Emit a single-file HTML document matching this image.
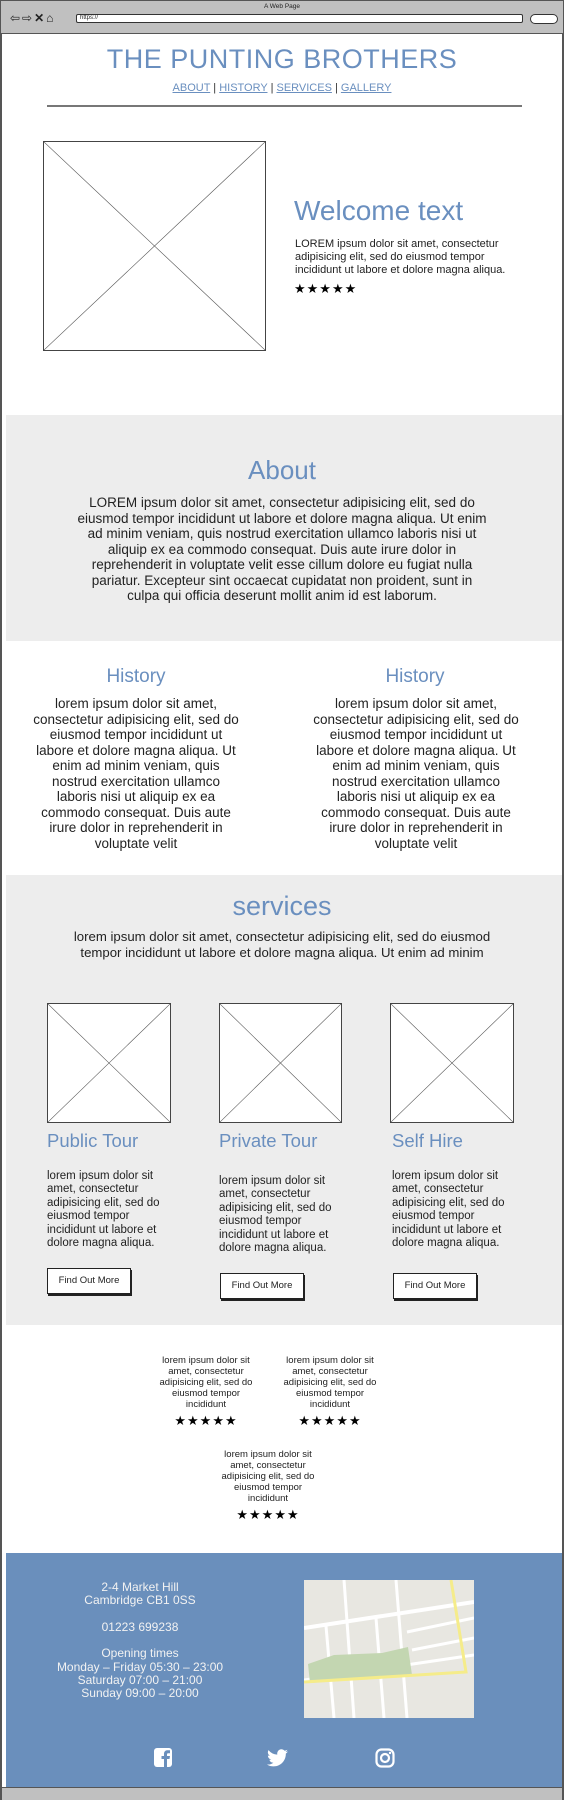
<!DOCTYPE html>
<html><head><meta charset="utf-8"><style>
*{margin:0;padding:0;box-sizing:border-box}
body{width:564px;height:1800px;position:relative;background:#fff;font-family:"Liberation Sans",sans-serif;color:#222;overflow:hidden}
.a{position:absolute}
.blue{color:#6a8fbf}
.c{text-align:center}
.ph{position:absolute;border:1.5px solid #444;background:#fff}
.ph svg{position:absolute;left:0;top:0;width:100%;height:100%}
.btn{position:absolute;border:1.5px solid #222;box-shadow:1px 2px 0 #222;background:#fff;font-size:9.5px;text-align:center;line-height:23px}
.stars{font-size:13px;letter-spacing:1px;color:#000}
</style></head><body>
<div class="a" style="left:0;top:0;width:564px;height:1800px;border:2px solid #555;border-top:none"></div>
<div class="a" style="left:0;top:0;width:564px;height:34px;background:#c0c0c0;border:1.5px solid #555"></div>
<div class="a c" style="left:0;top:3px;width:564px;font-size:6.5px;color:#222">A Web Page</div>
<div class="a" style="left:10px;top:11px;font-size:12px;color:#222;letter-spacing:2px">⇦⇨<b>✕</b>⌂</div>
<div class="a" style="left:76px;top:14px;width:447px;height:9px;border:1.5px solid #333;border-radius:2px;background:#fff;font-size:6px;line-height:6px;padding-left:3px">https://</div>
<div class="a" style="left:530px;top:14px;width:28px;height:10px;border:1.5px solid #333;border-radius:6px;background:#fff"></div>
<div class="a" style="left:2px;top:1787px;width:560px;height:13px;background:#c0c0c0;border-top:1.5px solid #555"></div>

<div class="a c blue" style="left:0;top:44px;width:564px;font-size:27px;letter-spacing:0.5px">THE PUNTING BROTHERS</div>
<div class="a c blue" style="left:0;top:82px;width:564px;font-size:11px"><u>ABOUT</u> <span style="color:#333">|</span> <u>HISTORY</u> <span style="color:#333">|</span> <u>SERVICES</u> <span style="color:#333">|</span> <u>GALLERY</u></div>
<div class="a" style="left:47px;top:105px;width:475px;height:1.5px;background:#777"></div>

<div class="ph" style="left:43px;top:141px;width:223px;height:210px"><svg viewBox="0 0 100 100" preserveAspectRatio="none"><path d="M0 0L100 100M100 0L0 100" stroke="#555" stroke-width="0.6" vector-effect="non-scaling-stroke" fill="none"/></svg></div>
<div class="a blue" style="left:294px;top:195px;font-size:28px">Welcome text</div>
<div class="a" style="left:295px;top:238px;font-size:11px;line-height:13.2px">LOREM ipsum dolor sit amet, consectetur<br>adipisicing elit, sed do eiusmod tempor<br>incididunt ut labore et dolore magna aliqua.</div>
<div class="a stars" style="left:294px;top:281px">★★★★★</div>

<div class="a" style="left:6px;top:415px;width:556px;height:226px;background:#ededed"></div>
<div class="a c blue" style="left:0;top:455px;width:564px;font-size:26px">About</div>
<div class="a c" style="left:0;top:495px;width:564px;font-size:13.5px;line-height:15.5px">LOREM ipsum dolor sit amet, consectetur adipisicing elit, sed do<br>eiusmod tempor incididunt ut labore et dolore magna aliqua. Ut enim<br>ad minim veniam, quis nostrud exercitation ullamco laboris nisi ut<br>aliquip ex ea commodo consequat. Duis aute irure dolor in<br>reprehenderit in voluptate velit esse cillum dolore eu fugiat nulla<br>pariatur. Excepteur sint occaecat cupidatat non proident, sunt in<br>culpa qui officia deserunt mollit anim id est laborum.</div>

<div class="a c blue" style="left:36px;top:666px;width:200px;font-size:19px">History</div>
<div class="a c blue" style="left:315px;top:666px;width:200px;font-size:19px">History</div>
<div class="a c" style="left:6px;top:696px;width:260px;font-size:13.5px;line-height:15.5px">lorem ipsum dolor sit amet,<br>consectetur adipisicing elit, sed do<br>eiusmod tempor incididunt ut<br>labore et dolore magna aliqua. Ut<br>enim ad minim veniam, quis<br>nostrud exercitation ullamco<br>laboris nisi ut aliquip ex ea<br>commodo consequat. Duis aute<br>irure dolor in reprehenderit in<br>voluptate velit</div>
<div class="a c" style="left:286px;top:696px;width:260px;font-size:13.5px;line-height:15.5px">lorem ipsum dolor sit amet,<br>consectetur adipisicing elit, sed do<br>eiusmod tempor incididunt ut<br>labore et dolore magna aliqua. Ut<br>enim ad minim veniam, quis<br>nostrud exercitation ullamco<br>laboris nisi ut aliquip ex ea<br>commodo consequat. Duis aute<br>irure dolor in reprehenderit in<br>voluptate velit</div>

<div class="a" style="left:6px;top:875px;width:556px;height:450px;background:#ededed"></div>
<div class="a c blue" style="left:0;top:891px;width:564px;font-size:27px">services</div>
<div class="a c" style="left:0;top:929px;width:564px;font-size:13.2px;line-height:16px">lorem ipsum dolor sit amet, consectetur adipisicing elit, sed do eiusmod<br>tempor incididunt ut labore et dolore magna aliqua. Ut enim ad minim</div>

<div class="ph" style="left:47px;top:1003px;width:124px;height:120px"><svg viewBox="0 0 100 100" preserveAspectRatio="none"><path d="M0 0L100 100M100 0L0 100" stroke="#555" stroke-width="0.6" vector-effect="non-scaling-stroke" fill="none"/></svg></div>
<div class="ph" style="left:219px;top:1003px;width:123px;height:120px"><svg viewBox="0 0 100 100" preserveAspectRatio="none"><path d="M0 0L100 100M100 0L0 100" stroke="#555" stroke-width="0.6" vector-effect="non-scaling-stroke" fill="none"/></svg></div>
<div class="ph" style="left:390px;top:1003px;width:124px;height:120px"><svg viewBox="0 0 100 100" preserveAspectRatio="none"><path d="M0 0L100 100M100 0L0 100" stroke="#555" stroke-width="0.6" vector-effect="non-scaling-stroke" fill="none"/></svg></div>

<div class="a blue" style="left:47px;top:1130px;font-size:18.5px">Public Tour</div>
<div class="a blue" style="left:219px;top:1130px;font-size:18.5px">Private Tour</div>
<div class="a blue" style="left:392px;top:1130px;font-size:18.5px">Self Hire</div>

<div class="a" style="left:47px;top:1170px;font-size:11.5px;line-height:13.4px">lorem ipsum dolor sit<br>amet, consectetur<br>adipisicing elit, sed do<br>eiusmod tempor<br>incididunt ut labore et<br>dolore magna aliqua.</div>
<div class="a" style="left:219px;top:1175px;font-size:11.5px;line-height:13.4px">lorem ipsum dolor sit<br>amet, consectetur<br>adipisicing elit, sed do<br>eiusmod tempor<br>incididunt ut labore et<br>dolore magna aliqua.</div>
<div class="a" style="left:392px;top:1170px;font-size:11.5px;line-height:13.4px">lorem ipsum dolor sit<br>amet, consectetur<br>adipisicing elit, sed do<br>eiusmod tempor<br>incididunt ut labore et<br>dolore magna aliqua.</div>

<div class="btn" style="left:47px;top:1268px;width:84px;height:26px">Find Out More</div>
<div class="btn" style="left:220px;top:1273px;width:84px;height:26px">Find Out More</div>
<div class="btn" style="left:393px;top:1273px;width:84px;height:26px">Find Out More</div>

<div class="a c" style="left:146px;top:1355px;width:120px;font-size:9.5px;line-height:11px">lorem ipsum dolor sit<br>amet, consectetur<br>adipisicing elit, sed do<br>eiusmod tempor<br>incididunt</div>
<div class="a c stars" style="left:146px;top:1413px;width:120px">★★★★★</div>
<div class="a c" style="left:270px;top:1355px;width:120px;font-size:9.5px;line-height:11px">lorem ipsum dolor sit<br>amet, consectetur<br>adipisicing elit, sed do<br>eiusmod tempor<br>incididunt</div>
<div class="a c stars" style="left:270px;top:1413px;width:120px">★★★★★</div>
<div class="a c" style="left:208px;top:1449px;width:120px;font-size:9.5px;line-height:11px">lorem ipsum dolor sit<br>amet, consectetur<br>adipisicing elit, sed do<br>eiusmod tempor<br>incididunt</div>
<div class="a c stars" style="left:208px;top:1507px;width:120px">★★★★★</div>

<div class="a" style="left:6px;top:1553px;width:556px;height:234px;background:#6a8fbc"></div>
<div class="a c" style="left:35px;top:1581px;width:210px;font-size:12px;line-height:13.3px;color:#f2f2f2">2-4 Market Hill<br>Cambridge CB1 0SS<br><br>01223 699238<br><br>Opening times<br>Monday – Friday 05:30 – 23:00<br>Saturday 07:00 – 21:00<br>Sunday 09:00 – 20:00</div>
<svg class="a" style="left:304px;top:1580px" width="170" height="138" viewBox="0 0 170 138">
<rect width="170" height="138" fill="#e8e7e1"/>
<path d="M0 48L170 22" stroke="#fff" stroke-width="4" fill="none"/>
<path d="M40 0L50 138M92 0L103 138M22 46L30 138M72 38L80 138M103 52L170 38M108 70L170 58M0 100L170 75" stroke="#fff" stroke-width="3" fill="none"/>
<path d="M4 84L30 75L78 73L104 67L108 95L6 103Z" fill="#c3d6b1"/>
<path d="M0 102L162 92L147 0" stroke="#f5ec8a" stroke-width="3" fill="none"/>
</svg>
<svg class="a" style="left:153px;top:1747px" width="20" height="21" viewBox="0 0 20 21"><rect x="1" y="1" width="18" height="19" rx="3" fill="#fff"/><path d="M11 21V12H8.5V9H11V7c0-2.5 1.3-3.8 3.7-3.8H17v3h-1.8c-.8 0-1.2.4-1.2 1.2V9h3l-.5 3H14v9z" fill="#6a8fbc"/></svg>
<svg class="a" style="left:267px;top:1749px" width="21" height="18" viewBox="0 0 24 20"><path d="M24 2.4a9.8 9.8 0 0 1-2.8.8A4.9 4.9 0 0 0 23.300.5a9.9 9.9 0 0 1-3.1 1.2A4.9 4.9 0 0 0 11.8 6.2 14 14 0 0 1 1.7 1 4.9 4.9 0 0 0 3.2 7.6 4.9 4.9 0 0 1 1 7v.1a4.9 4.9 0 0 0 3.9 4.8 4.9 4.9 0 0 1-2.2.1 4.9 4.9 0 0 0 4.6 3.4A9.9 9.9 0 0 1 0 17.4 14 14 0 0 0 7.5 19.6c9 0 14-7.5 14-14v-.6A10 10 0 0 0 24 2.4z" fill="#fff"/></svg>
<svg class="a" style="left:375px;top:1748px" width="20" height="20" viewBox="0 0 20 20"><rect x="1.5" y="1.5" width="17" height="17" rx="5" fill="none" stroke="#fff" stroke-width="2.2"/><circle cx="10" cy="10" r="4" fill="none" stroke="#fff" stroke-width="2.2"/><circle cx="15" cy="5" r="1.2" fill="#fff"/></svg>
</body></html>
